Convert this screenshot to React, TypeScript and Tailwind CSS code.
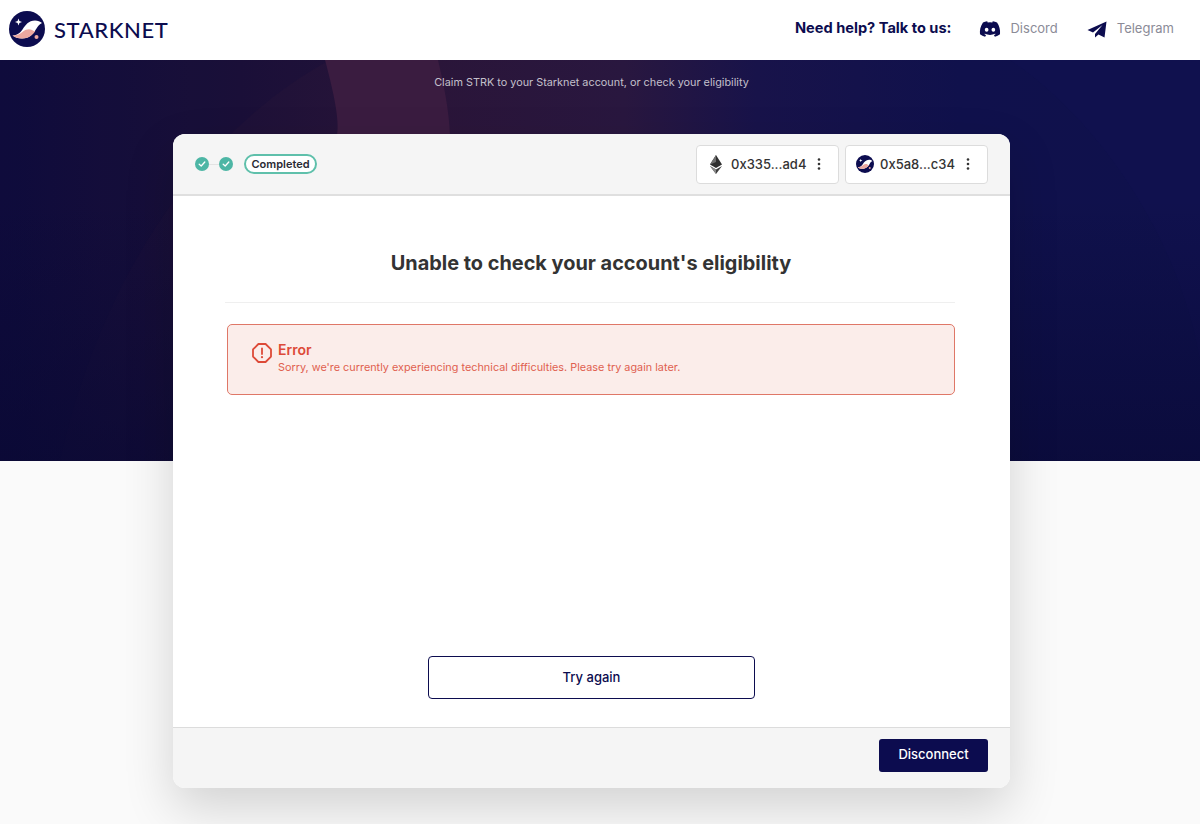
import React from 'react'
import { FaDiscord } from 'react-icons/fa'

function StarknetLogo({ size }: { size: number }) {
  return (
    <svg width={size} height={size} viewBox="0 0 36 36" className="shrink-0">
      <circle cx="18" cy="18" r="18" fill="#0c0c4f" />
      <path d="M3.5 24.5C8 24.5 11 22 13.5 18.5C16.5 14 19.5 9.5 26 9.5C29 9.5 31 10.5 33 12C30.5 13 29 15 27.5 17.5C24.5 22.5 20.5 27.5 13 27.5C9 27.5 6 26.5 3.5 24.5Z" fill="#ffffff" />
      <path d="M3.5 24.5C8 24.5 11 23 14 20.5C17 18 20.5 17.5 23 19C24.5 20 25.5 20.5 26.5 19.5C24 24 19.5 27.5 13 27.5C9 27.5 6 26.5 3.5 24.5Z" fill="#eca8a0" />
      <circle cx="27.5" cy="26" r="2" fill="#eca8a0" />
      <path d="M9.5 7.5L10.4 10.1L13 11L10.4 11.9L9.5 14.5L8.6 11.9L6 11L8.6 10.1Z" fill="#ffffff" />
    </svg>
  )
}

function EthLogo() {
  return (
    <svg width="12" height="19" viewBox="0 0 12 19" className="shrink-0">
      <path d="M6 0L0 9.6L6 13L12 9.6Z" fill="#2f2f2f" />
      <path d="M6 0L0 9.6L6 7Z" fill="#6e6e6e" />
      <path d="M0 11L6 19L12 11L6 14.4Z" fill="#3d3d3d" />
      <path d="M0 11L6 19V14.4Z" fill="#8a8a8a" />
    </svg>
  )
}

function Dots() {
  return (
    <svg width="4" height="12" viewBox="0 0 4 12" className="shrink-0">
      <circle cx="2" cy="1.5" r="1.3" fill="#333" />
      <circle cx="2" cy="6" r="1.3" fill="#333" />
      <circle cx="2" cy="10.5" r="1.3" fill="#333" />
    </svg>
  )
}

function StepCheck() {
  return (
    <span className="flex h-[14px] w-[14px] items-center justify-center rounded-full bg-[#4db6a5]">
      <svg width="8" height="8" viewBox="0 0 8 8" fill="none">
        <path d="M1.2 4.2L3.2 6L6.8 2" stroke="#fff" strokeWidth="1.3" strokeLinecap="round" strokeLinejoin="round" />
      </svg>
    </span>
  )
}

function AccountChip({ icon, address }: { icon: React.ReactNode; address: string }) {
  return (
    <div className="flex h-[39px] w-[143px] items-center rounded-[4px] border border-[#dcdcdc] bg-white pl-[10px]">
      <span className="flex w-[18px] justify-center">{icon}</span>
      <span className="ml-[6px] text-[13px] font-medium leading-none text-[#333]">{address}</span>
      <span className="ml-[11px]"><Dots /></span>
    </div>
  )
}

export default function App() {
  return (
    <div className="h-[824px] overflow-hidden bg-[#fafafa] font-['Inter',sans-serif]">
      <header className="flex h-[60px] items-center justify-between bg-white pb-[2px] pl-[9px] pr-[26px]">
        <div className="flex items-center gap-[9px]">
          <StarknetLogo size={36} />
          <span className="font-['Lato',sans-serif] text-[22px] font-medium tracking-[0.6px] text-[#0c0c4f]">STARKNET</span>
        </div>
        <div className="flex items-center">
          <span className="text-[14.6px] font-bold text-[#0c0c4f]">Need help? Talk to us:</span>
          <FaDiscord className="ml-[28px] text-[22px] text-[#0c0c4f]" />
          <span className="ml-[9px] text-[13px] text-[#8b8b97]">Discord</span>
          <svg width="20" height="17" viewBox="0 0 20 17" className="ml-[29px]">
            <path d="M19.5 0.5L0.5 9L6 11.5L15.5 4L8 13V16.5L11.5 13.5L17.5 16.5Z" fill="#0c0c4f" />
          </svg>
          <span className="ml-[10px] text-[13px] text-[#8b8b97]">Telegram</span>
        </div>
      </header>

      <section className="relative h-[401px] overflow-hidden bg-[linear-gradient(90deg,#100c3c_0%,#1e1138_20%,#2a1539_36%,#29173f_52%,#18134a_63%,#10114c_80%,#0f114c_100%)] pt-[15px]">
        {/* background swoosh */}
        <svg className="absolute inset-0 h-full w-full" viewBox="0 0 1200 401" preserveAspectRatio="none">
          <path d="M60 401C100 220 200 70 330 0H0V401Z" fill="#0c0a3c" opacity="0.18" />
          <path d="M325 0C333 30 340 60 337 75H450C449 50 444 25 438 0Z" fill="#3a1c40" />
          <path d="M1010 0C1100 60 1180 180 1200 300V0Z" fill="#14165a" opacity="0.2" />
        </svg>
        <div className="absolute inset-0 bg-[linear-gradient(180deg,rgba(8,8,50,0)_35%,rgba(8,8,50,0.6)_100%)]" />
        <p className="relative ml-[173px] w-[837px] text-center text-[10.85px] leading-[14px] text-[#c4c0cc]">
          Claim STRK to your Starknet account, or check your eligibility
        </p>
      </section>

      <main className="relative -mt-[327px] ml-[173px] flex h-[654px] w-[837px] flex-col overflow-hidden rounded-[12px] bg-white shadow-[0_20px_50px_rgba(0,0,0,0.16)]">
        <div className="flex h-[62px] shrink-0 items-center justify-between border-b-2 border-[#dfdfdf] bg-[#f5f5f5] px-[22px]">
          <div className="flex items-center">
            <StepCheck />
            <span className="h-px w-[10px] bg-[#e3e3e3]" />
            <StepCheck />
            <span className="ml-[11px] flex h-[20px] w-[73px] items-center justify-center rounded-full border-2 border-[#5fc0ab] bg-white text-[11px] font-semibold text-[#2a2a33]">
              Completed
            </span>
          </div>
          <div className="flex items-center gap-[6px]">
            <AccountChip icon={<EthLogo />} address="0x335...ad4" />
            <AccountChip icon={<StarknetLogo size={18} />} address="0x5a8...c34" />
          </div>
        </div>

        <div className="flex flex-1 flex-col pl-[52px] pr-[55px]">
          <h1 className="pl-[2px] pt-[54px] text-center text-[19.9px] font-bold leading-[26px] text-[#333]">
            Unable to check your account's eligibility
          </h1>
          <div className="mt-[26px] h-px bg-[#efefef]" />
          <div className="ml-[2px] mt-[21px] flex h-[71px] rounded-[5px] border-[1.5px] border-[#df7767] bg-[#fbedea] pl-[24px] pt-[16px]">
            <svg width="20" height="20" viewBox="0 0 20 20" fill="none" className="mt-[2px] shrink-0">
              <path d="M6.4 1H13.6L19 6.4V13.6L13.6 19H6.4L1 13.6V6.4Z" stroke="#dd4a38" strokeWidth="1.8" strokeLinejoin="round" />
              <path d="M10 5.5V11" stroke="#dd4a38" strokeWidth="1.8" strokeLinecap="round" />
              <circle cx="10" cy="14.2" r="1.1" fill="#dd4a38" />
            </svg>
            <div className="ml-[6px]">
              <div className="text-[14px] font-semibold leading-[18px] text-[#dd4a38]">Error</div>
              <div className="mt-[1px] text-[10.85px] leading-[15px] text-[#e0604f]">
                Sorry, we're currently experiencing technical difficulties. Please try again later.
              </div>
            </div>
          </div>
          <div className="mb-[28px] mt-auto flex justify-center pl-[3px]">
            <button className="h-[43px] w-[327px] rounded-[4px] border border-[#0c0c4f] bg-white text-[13px] font-medium text-[#0c0c4f]">
              Try again
            </button>
          </div>
        </div>

        <div className="flex h-[61px] shrink-0 items-center justify-end border-t border-[#dcdcdc] bg-[#f5f5f5] pb-[6px] pr-[22px]">
          <button className="h-[33px] w-[109px] rounded-[3px] bg-[#0c0c4f] text-[13px] font-medium text-white">
            Disconnect
          </button>
        </div>
      </main>
    </div>
  )
}
